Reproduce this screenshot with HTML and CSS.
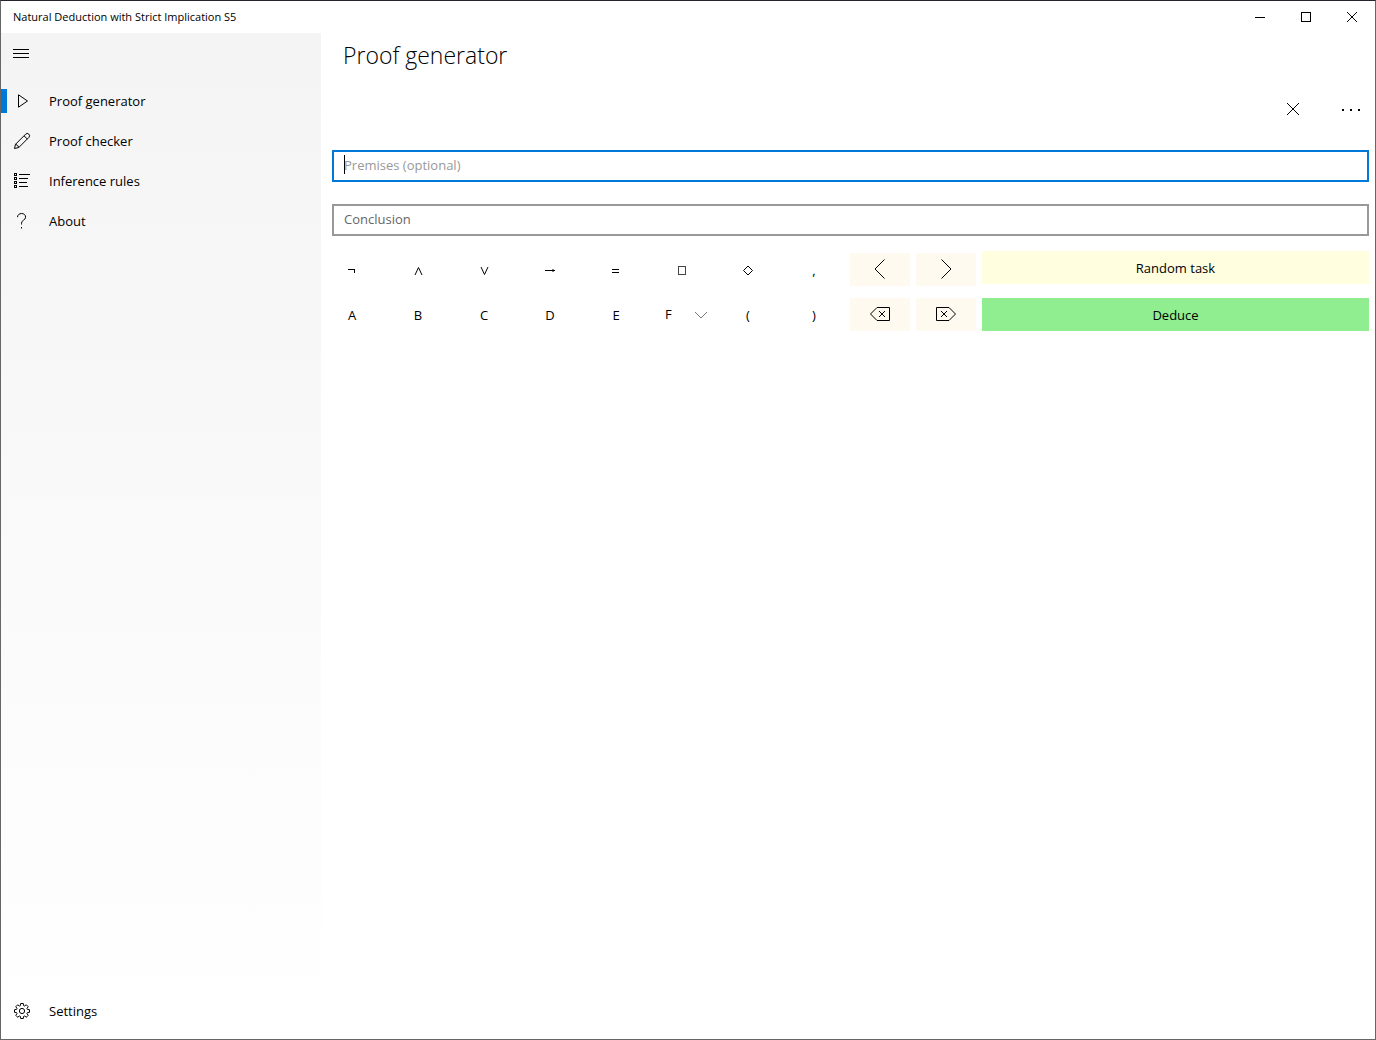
FILE: index.html
```html
<!DOCTYPE html>
<html lang="en">
<head>
    <meta charset="UTF-8">
    <title>Natural Deduction with Strict Implication S5</title>
    <link rel="stylesheet" href="styles.css">
</head>
<body>
    <div class="window">
        <header class="titlebar">
            <span class="titlebar-text">Natural Deduction with Strict Implication S5</span>
            <button type="button" class="caption-button" aria-label="Minimize">
                <svg width="10" height="10" viewBox="0 0 10 10" shape-rendering="crispEdges"><path d="M0 5.5H10"/></svg>
            </button>
            <button type="button" class="caption-button" aria-label="Maximize">
                <svg width="10" height="10" viewBox="0 0 10 10" shape-rendering="crispEdges"><path d="M.5 .5H9.5V9.5H.5Z"/></svg>
            </button>
            <button type="button" class="caption-button" aria-label="Close">
                <svg width="10" height="10" viewBox="0 0 10 10"><path d="M0 0L10 10M10 0L0 10"/></svg>
            </button>
        </header>

        <div class="layout">
            <nav class="sidebar">
                <button type="button" class="menu-button" aria-label="Menu">
                    <svg width="16" height="10" viewBox="0 0 16 10" shape-rendering="crispEdges"><path d="M0 .5H16M0 4.5H16M0 8.5H16"/></svg>
                </button>
                <a href="#generator" class="nav-item active">
                    <svg width="18" height="18" viewBox="0 0 18 18"><path d="M5.5 2.8V15.2L14.5 9Z"/></svg>
                    Proof generator
                </a>
                <a href="#checker" class="nav-item">
                    <svg width="18" height="18" viewBox="0 0 18 18"><path d="M1.5 16.5L2.5 12.3L12.6 2.2A2.2 2.2 0 0 1 15.9 5.4L5.8 15.5ZM11 3.8L14.3 7M2.5 12.3A4.5 4.5 0 0 1 5.8 15.5"/></svg>
                    Proof checker
                </a>
                <a href="#rules" class="nav-item">
                    <svg width="18" height="18" viewBox="0 0 18 18" shape-rendering="crispEdges"><path d="M6 2.5H17M6 6.5H15M6 10.5H14M6 14.5H15M1.5 1.5H3.5V3.5H1.5ZM1.5 5.5H3.5V7.5H1.5ZM1.5 9.5H3.5V11.5H1.5ZM1.5 13.5H3.5V15.5H1.5Z"/></svg>
                    Inference rules
                </a>
                <a href="#about" class="nav-item">
                    <svg width="18" height="18" viewBox="0 0 18 18"><path d="M4.5 5.2C4.5 3 6.2 1.5 8.6 1.5S12.6 3 12.6 5.2C12.6 8 8.5 8.2 8.5 11.2V12.5M8.5 15V16.5"/></svg>
                    About
                </a>
                <a href="#settings" class="nav-item settings">
                    <svg width="18" height="18" viewBox="0 0 18 18"><path d="M7.7 1.5H10.3L10.6 3.6L11.6 4L13.3 2.8L15.2 4.7L14 6.4L14.4 7.4L16.5 7.7V10.3L14.4 10.6L14 11.6L15.2 13.3L13.3 15.2L11.6 14L10.6 14.4L10.3 16.5H7.7L7.4 14.4L6.4 14L4.7 15.2L2.8 13.3L4 11.6L3.6 10.6L1.5 10.3V7.7L3.6 7.4L4 6.4L2.8 4.7L4.7 2.8L6.4 4L7.4 3.6Z"/><circle cx="9" cy="9" r="2.6"/></svg>
                    Settings
                </a>
            </nav>

            <main class="content">
                <h1>Proof generator</h1>
                <div class="command-bar">
                    <button type="button" class="command-button" aria-label="Clear">
                        <svg width="12" height="12" viewBox="0 0 12 12"><path d="M0 0L12 12M12 0L0 12"/></svg>
                    </button>
                    <button type="button" class="command-button more" aria-label="More">
                        <svg class="filled" width="18" height="4" viewBox="0 0 18 4"><path d="M0 2H2V4H0ZM8 2H10V4H8ZM16 2H18V4H16Z"/></svg>
                    </button>
                </div>

                <form id="proofForm">
                    <div class="field">
                        <input type="text" class="focused" id="premises" placeholder="Premises (optional)" aria-label="Premises (optional)">
                        <span class="caret"></span>
                    </div>
                    <div class="field">
                        <input type="text" id="conclusion" placeholder="Conclusion" aria-label="Conclusion">
                    </div>

                    <div class="keyboard">
                        <button type="button" class="key" aria-label="Not">
                            <svg width="12" height="12" viewBox="0 0 12 12" shape-rendering="crispEdges"><path d="M2 5.5H8.5V9"/></svg>
                        </button>
                        <button type="button" class="key" aria-label="And">
                            <svg width="12" height="12" viewBox="0 0 12 12"><path d="M3 11L6.5 3.5L10 11"/></svg>
                        </button>
                        <button type="button" class="key" aria-label="Or">
                            <svg width="12" height="12" viewBox="0 0 12 12"><path d="M3 3L6.5 10.5L10 3"/></svg>
                        </button>
                        <button type="button" class="key" aria-label="Implies">
                            <svg width="12" height="12" viewBox="0 0 12 12"><path d="M1 6.5H11M9 5V8"/></svg>
                        </button>
                        <button type="button" class="key" aria-label="Equivalent">
                            <svg width="12" height="12" viewBox="0 0 12 12" shape-rendering="crispEdges"><path d="M2 5.5H9M2 8.5H9"/></svg>
                        </button>
                        <button type="button" class="key" aria-label="Necessarily">
                            <svg class="box" width="12" height="12" viewBox="0 0 12 12" shape-rendering="crispEdges"><path d="M2.5 2.5H9.5V10.5H2.5Z"/></svg>
                        </button>
                        <button type="button" class="key" aria-label="Possibly">
                            <svg width="12" height="12" viewBox="0 0 12 12"><path d="M6 2L10.5 6.5L6 11L1.5 6.5Z"/></svg>
                        </button>
                        <button type="button" class="key">,</button>
                        <button type="button" class="key edit-key" aria-label="Move left">
                            <svg width="22" height="22" viewBox="0 0 22 22"><path d="M15.5 1.5L6 11L15.5 20.5"/></svg>
                        </button>
                        <button type="button" class="key edit-key" aria-label="Move right">
                            <svg width="22" height="22" viewBox="0 0 22 22"><path d="M6.5 1.5L16 11L6.5 20.5"/></svg>
                        </button>
                        <button type="button" class="key random">Random task</button>

                        <button type="button" class="key">A</button>
                        <button type="button" class="key">B</button>
                        <button type="button" class="key">C</button>
                        <button type="button" class="key">D</button>
                        <button type="button" class="key">E</button>
                        <div class="letter-select">
                            <select id="letter" aria-label="More letters">
                                <option>F</option>
                                <option>G</option>
                                <option>H</option>
                            </select>
                            <svg width="12" height="8" viewBox="0 0 12 8"><path d="M0 1L6 7L12 1"/></svg>
                        </div>
                        <button type="button" class="key">(</button>
                        <button type="button" class="key">)</button>
                        <button type="button" class="key edit-key" aria-label="Backspace">
                            <svg width="22" height="16" viewBox="0 0 22 16"><path d="M8 1.5H20.5V14.5H8L1.5 8ZM10 5L16 11M16 5L10 11"/></svg>
                        </button>
                        <button type="button" class="key edit-key" aria-label="Delete">
                            <svg width="22" height="16" viewBox="0 0 22 16"><path d="M14 1.5H1.5V14.5H14L20.5 8ZM6 5L12 11M12 5L6 11"/></svg>
                        </button>
                        <button type="submit" class="key deduce">Deduce</button>
                    </div>
                </form>
            </main>
        </div>
    </div>
</body>
</html>
```

FILE: styles.css
```css
* {
    box-sizing: border-box;
}
body {
    margin: 0;
    font-family: "Segoe UI", "Open Sans", "Noto Sans", sans-serif;
    font-size: 13px;
    color: #000;
    background: #fff;
}
button, input, select {
    font: inherit;
    color: inherit;
    border: none;
    border-radius: 0;
    background: none;
    padding: 0;
    margin: 0;
}
svg {
    display: block;
    fill: none;
    stroke: #000;
    stroke-width: 1;
}
svg.filled {
    fill: #000;
    stroke: none;
}
svg.box {
    stroke: #444;
}
.window {
    display: flex;
    flex-direction: column;
    min-height: 100vh;
    border: 1px solid #666;
    border-top-color: #25232b;
}

/* title bar */
.titlebar {
    display: flex;
    height: 32px;
    align-items: stretch;
}
.titlebar-text {
    flex: 1;
    padding-left: 12px;
    font-size: 11px;
    line-height: 32px;
}
.caption-button {
    display: flex;
    width: 46px;
    align-items: center;
    justify-content: center;
}
.layout {
    display: flex;
    flex: 1;
}

/* sidebar */
.sidebar {
    display: flex;
    flex-direction: column;
    width: 320px;
    padding-bottom: 8px;
    background: linear-gradient(#f4f4f4, #fff);
}
.menu-button {
    height: 41px;
    padding-left: 12px;
    margin-bottom: 7px;
}
.nav-item {
    display: flex;
    align-items: center;
    gap: 18px;
    height: 40px;
    padding-left: 12px;
    color: #000;
    text-decoration: none;
}
.nav-item.active {
    background: linear-gradient(#0078d7, #0078d7) left center / 6px 24px no-repeat;
}
.nav-item.settings {
    margin-top: auto;
}

/* content */
.content {
    flex: 1;
}
h1 {
    margin: 0 0 8px;
    padding-left: 22px;
    font-size: 23px;
    font-weight: 300;
    line-height: 44px;
}
.command-bar {
    display: flex;
    justify-content: flex-end;
    height: 48px;
    margin-bottom: 17px;
}
.command-button {
    display: flex;
    width: 68px;
    align-items: center;
    justify-content: center;
}
.command-button.more {
    width: 48px;
}
.field {
    position: relative;
    margin: 0 6px 22px 11px;
}
.field input {
    display: block;
    width: 100%;
    height: 32px;
    padding: 0 10px 2px;
    border: 2px solid #999;
    outline: none;
}
.field input::placeholder {
    color: #666;
    opacity: 1;
}
.field input.focused {
    border-color: #0078d7;
}
.field input.focused::placeholder {
    color: #999;
}
.caret {
    position: absolute;
    top: 5px;
    left: 12px;
    width: 1px;
    height: 19px;
    background: #000;
}

/* keyboard */
.keyboard {
    display: grid;
    grid-template-columns: repeat(10, 60px) 1fr;
    grid-template-rows: 35px 33px;
    gap: 12px 6px;
    align-items: end;
    margin: -7px 6px 0 1px;
}
.key {
    display: flex;
    height: 33px;
    align-items: center;
    justify-content: center;
}
.edit-key {
    padding-bottom: 1px;
    background: #fffaf0;
}
.random {
    align-self: start;
    background: #ffffe0;
}
.deduce {
    background: #90ee90;
}
.letter-select {
    display: grid;
    height: 33px;
    align-items: center;
}
.letter-select select {
    grid-area: 1 / 1;
    height: 33px;
    padding: 0 0 2px 13px;
    appearance: none;
}
.letter-select svg {
    grid-area: 1 / 1;
    justify-self: end;
    margin-right: 5px;
    stroke: #777;
    pointer-events: none;
}
```
